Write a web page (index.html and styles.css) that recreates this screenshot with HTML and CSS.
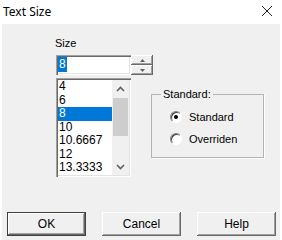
FILE: index.html
```html
<!DOCTYPE html>
<html lang="en">
<head>
    <meta charset="UTF-8">
    <title>Text Size</title>
    <link rel="stylesheet" href="styles.css">
</head>
<body>
    <div class="window">
        <div class="titlebar">
            <span class="title">Text Size</span>
            <svg class="close" width="12" height="12" viewBox="0 0 12 12">
                <path d="M1 1 L11 11 M11 1 L1 11" stroke="#222" stroke-width="1" fill="none"/>
            </svg>
        </div>
        <div class="client">
            <div class="top">
                <div class="size-col">
                    <div class="label">Size</div>
                    <div class="spin-row">
                        <div class="edit"><span class="sel">8</span></div>
                        <div class="spin">
                            <div class="spin-btn">
                                <svg width="5" height="3" viewBox="0 0 5 3"><path d="M0 3 L2.5 0 L5 3 Z" fill="#606060"/></svg>
                            </div>
                            <div class="spin-btn">
                                <svg width="5" height="3" viewBox="0 0 5 3"><path d="M0 0 L2.5 3 L5 0 Z" fill="#606060"/></svg>
                            </div>
                        </div>
                    </div>
                    <div class="listbox">
                        <div class="items">
                            <div class="item">4</div>
                            <div class="item">6</div>
                            <div class="item selected">8</div>
                            <div class="item">10</div>
                            <div class="item">10.6667</div>
                            <div class="item">12</div>
                            <div class="item">13.3333</div>
                        </div>
                        <div class="scrollbar">
                            <div class="arrow">
                                <svg width="9" height="6" viewBox="0 0 9 6"><path d="M1 5 L4.5 1.5 L8 5" stroke="#606060" stroke-width="1.6" fill="none"/></svg>
                            </div>
                            <div class="track"><div class="thumb"></div></div>
                            <div class="arrow">
                                <svg width="9" height="6" viewBox="0 0 9 6"><path d="M1 1 L4.5 4.5 L8 1" stroke="#606060" stroke-width="1.6" fill="none"/></svg>
                            </div>
                        </div>
                    </div>
                </div>
                <div class="group">
                    <div class="group-title">Standard:</div>
                    <div class="radio-row">
                        <span class="radio checked"></span>
                        <span>Standard</span>
                    </div>
                    <div class="radio-row">
                        <span class="radio"></span>
                        <span>Overriden</span>
                    </div>
                </div>
            </div>
            <div class="buttons">
                <button class="btn default">OK</button>
                <button class="btn">Cancel</button>
                <button class="btn">Help</button>
            </div>
        </div>
    </div>
</body>
</html>
```

FILE: styles.css
```css
body {
    margin: 0;
    font-family: "Liberation Sans", Arial, sans-serif;
    font-size: 11px;
    color: #000;
    background-color: #fff;
}

.window {
    width: 282px;
    height: 240px;
    display: flex;
    flex-direction: column;
    background-color: #fff;
}

.titlebar {
    height: 24px;
    display: flex;
    align-items: center;
    padding-left: 3px;
    padding-right: 9px;
}

.title {
    font-family: "Noto Sans", sans-serif;
    font-size: 12px;
    flex-grow: 1;
    margin-top: -1px;
}

.close {
    margin-top: -2px;
}

.client {
    flex-grow: 1;
    margin: 0 2px;
    background-color: #f0f0f0;
    display: flex;
    flex-direction: column;
}

.top {
    display: flex;
    align-items: flex-start;
}

.size-col {
    width: 96px;
    margin-left: 53px;
}

.label {
    margin-top: 12px;
    line-height: 14px;
}

.spin-row {
    display: flex;
    margin-top: 5px;
    margin-left: 1px;
    width: 97px;
}

.edit {
    width: 75px;
    height: 20px;
    box-sizing: border-box;
    background-color: #fff;
    box-shadow: inset 1px 1px 0 #a0a0a0, inset 2px 2px 0 #696969, inset -1px -1px 0 #fff, inset -2px -2px 0 #e3e3e3;
    padding: 2px 0 0 2px;
    font-size: 12px;
    line-height: 15px;
}

.sel {
    display: inline-block;
    background-color: #0078d7;
    color: #fff;
    padding: 0 1px;
}

.spin {
    width: 22px;
    height: 20px;
    display: flex;
    flex-direction: column;
}

.spin-btn {
    flex-grow: 1;
    display: flex;
    align-items: center;
    justify-content: center;
    background-color: #f0f0f0;
    box-shadow: inset -1px -1px 0 #696969, inset 1px 1px 0 #fff, inset -2px -2px 0 #a0a0a0;
}

.listbox {
    width: 75px;
    height: 99px;
    margin-top: 3px;
    margin-left: 1px;
    box-sizing: border-box;
    padding: 2px;
    display: flex;
    background-color: #fff;
    box-shadow: inset 1px 1px 0 #a0a0a0, inset 2px 2px 0 #696969, inset -1px -1px 0 #fff, inset -2px -2px 0 #e3e3e3;
    overflow: hidden;
}

.items {
    flex-grow: 1;
    font-size: 12px;
}

.item {
    height: 13.5px;
    line-height: 13.5px;
    padding-left: 1px;
}

.item.selected {
    background-color: #0078d7;
    color: #fff;
}

.scrollbar {
    width: 17px;
    display: flex;
    flex-direction: column;
    background-color: #f0f0f0;
}

.arrow {
    height: 17px;
    display: flex;
    align-items: center;
    justify-content: center;
}

.track {
    flex-grow: 1;
    padding-top: 1px;
}

.thumb {
    height: 38px;
    margin: 0 1px;
    background-color: #cdcdcd;
}

.group {
    margin-top: 70px;
    width: 113px;
    height: 64px;
    box-sizing: border-box;
    border: 1px solid #b4b4b4;
    box-shadow: 1px 1px 0 #fff;
}

.group-title {
    width: fit-content;
    margin: -7px 0 0 9px;
    padding: 0 2px;
    line-height: 12px;
    background-color: #f0f0f0;
}

.radio-row {
    display: flex;
    align-items: center;
    height: 22px;
    gap: 7px;
    padding-left: 18px;
}

.group-title + .radio-row {
    margin-top: 6px;
}

.radio {
    width: 12px;
    height: 12px;
    box-sizing: border-box;
    border-radius: 50%;
    background-color: #fff;
    border: 1px solid;
    border-color: #808080 #fff #fff #808080;
    box-shadow: inset 1px 1px 0 #404040;
    display: flex;
    align-items: center;
    justify-content: center;
}

.radio.checked::after {
    content: "";
    width: 4px;
    height: 4px;
    border-radius: 50%;
    background-color: #000;
}

.buttons {
    margin-top: auto;
    padding: 0 0 4px 5px;
    display: flex;
    gap: 16px;
}

.btn {
    width: 79px;
    height: 24px;
    font-family: "Liberation Sans", Arial, sans-serif;
    font-size: 12px;
    background-color: #f0f0f0;
    border: none;
    padding: 0;
    box-shadow: inset -1px -1px 0 #696969, inset 1px 1px 0 #fff, inset -2px -2px 0 #a0a0a0;
}

.btn.default {
    border: 1px solid #404040;
}
```
